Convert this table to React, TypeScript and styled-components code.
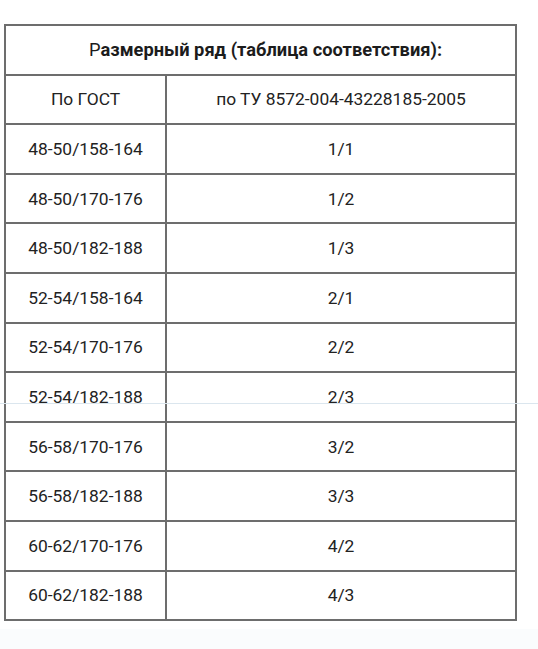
import styled, { createGlobalStyle } from "styled-components";

const GlobalStyle = createGlobalStyle`
  html, body {
    margin: 0;
    padding: 0;
    background: #ffffff;
  }
  body {
    font-family: Roboto, "Liberation Sans", sans-serif;
    color: #1f1f1f;
  }
`;

const rows: [string, string][] = [
    ["48-50/158-164", "1/1"],
    ["48-50/170-176", "1/2"],
    ["48-50/182-188", "1/3"],
    ["52-54/158-164", "2/1"],
    ["52-54/170-176", "2/2"],
    ["52-54/182-188", "2/3"],
    ["56-58/170-176", "3/2"],
    ["56-58/182-188", "3/3"],
    ["60-62/170-176", "4/2"],
    ["60-62/182-188", "4/3"],
];

export default function App() {
    return <Page>
        <GlobalStyle/>
        <Table>
            <TitleCell>
                <Light>Р</Light>азмерный ряд (таблица соответствия):
            </TitleCell>
            <Cell>По ГОСТ</Cell>
            <Cell>по ТУ 8572-004-43228185-2005</Cell>
            {rows.map(([gost, tu]) => [
                <Cell key={gost + "a"}>{gost}</Cell>,
                <Cell key={gost + "b"}>{tu}</Cell>,
            ])}
        </Table>
        <Footer/>
        <ScanLine/>
    </Page>
}

const Page = styled.div`
  position: relative;
  width: 538px;
  height: 649px;
  overflow: hidden;
  padding-top: 24px;
  box-sizing: border-box;
  display: flex;
  flex-direction: column;
`

const Table = styled.div`
  margin-left: 4px;
  width: 513px;
  display: grid;
  grid-template-columns: 159px 348px;
  grid-auto-rows: 47.6px;
  gap: 2px;
  padding: 2px;
  box-sizing: border-box;
  background: #6d6d6d;
`

const Cell = styled.div`
  background: #ffffff;
  display: flex;
  align-items: center;
  justify-content: center;
  font-size: 17.4px;
  color: #222222;
  white-space: nowrap;
`

const TitleCell = styled(Cell)`
  grid-column: 1 / span 2;
  font-weight: 700;
  font-size: 18.3px;
  padding-left: 10px;
  color: #1c1c1c;
`

const Light = styled.span`
  font-weight: 400;
`

const Footer = styled.div`
  margin-top: 8px;
  flex: 1;
  background: #fafcfd;
`

const ScanLine = styled.div`
  position: absolute;
  left: 0;
  right: 0;
  top: 403px;
  height: 1px;
  background: #dbe6ee;
`
